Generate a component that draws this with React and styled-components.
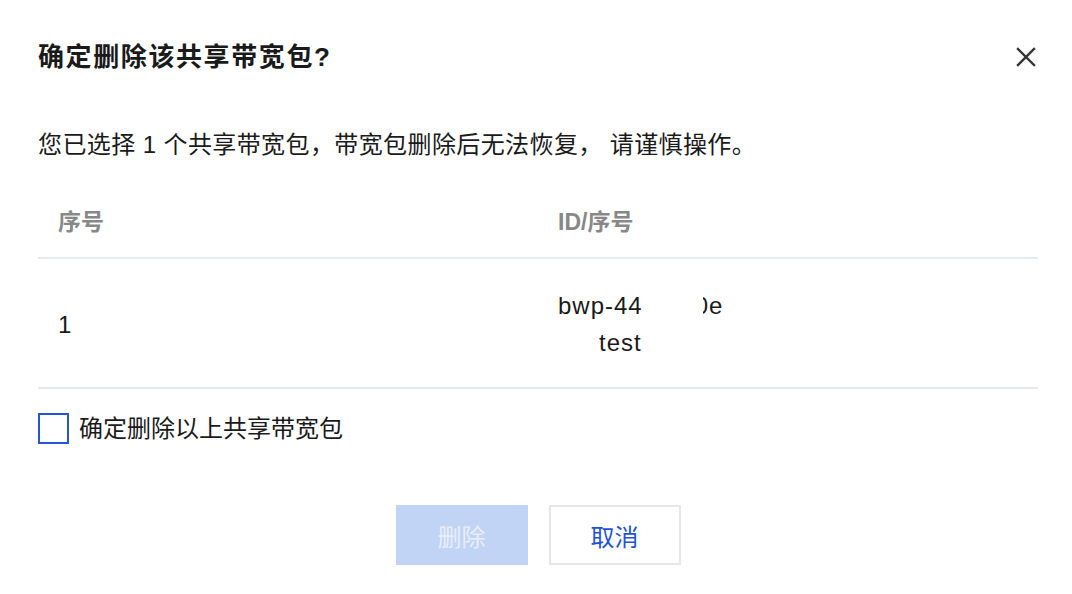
import React, { useState } from "react";
import styled, { createGlobalStyle } from "styled-components";

const GlobalStyle = createGlobalStyle`
  html, body {
    margin: 0;
    padding: 0;
    background: #ffffff;
  }
  body {
    font-family: "Liberation Sans", "Noto Sans CJK SC", sans-serif;
    color: #1a1a1a;
  }
`;

const Dialog = styled.div`
  width: 1072px;
  height: 594px;
  box-sizing: border-box;
  padding: 40px 34px 0 38px;
  background: #fff;
`;

const Header = styled.div`
  display: flex;
  align-items: center;
  justify-content: space-between;
  height: 34px;
`;

const Title = styled.h2`
  margin: 0;
  font-family: "Liberation Sans", "Noto Sans CJK SC", sans-serif;
  font-size: 26px;
  font-weight: 700;
  letter-spacing: 1.6px;
  color: #1a1a1a;
  line-height: 34px;
`;

const CloseBtn = styled.button`
  display: flex;
  align-items: center;
  justify-content: center;
  width: 24px;
  height: 24px;
  padding: 0;
  border: none;
  background: none;
  cursor: pointer;
  color: #333;
`;

const Message = styled.p`
  margin: 53px 0 0;
  font-size: 24px;
  line-height: 36px;
  letter-spacing: 0.4px;
  color: #1a1a1a;
`;

const Table = styled.div`
  margin-top: 20px;
  width: 1000px;
`;

const Row = styled.div`
  display: grid;
  grid-template-columns: 1fr 1fr;
  border-bottom: 2px solid #e6e9ef;
  padding: ${(p) => (p.$head ? "0" : "28px 0 26px")};
  height: ${(p) => (p.$head ? "74px" : "auto")};
  align-items: center;
`;

const HeadCell = styled.div`
  padding-left: 20px;
  font-size: 23px;
  font-weight: 700;
  color: #888888;
`;

const Cell = styled.div`
  padding-left: 20px;
  font-size: 24px;
  line-height: 37px;
  color: #1a1a1a;
`;

const IdLine = styled.div`
  letter-spacing: 1px;
  white-space: nowrap;
`;

const Mask = styled.span`
  display: inline-block;
  width: ${(p) => p.$w}px;
  margin-right: ${(p) => p.$overlap || 0}px;
  height: 30px;
  vertical-align: middle;
  background: #fff;
  position: relative;
  z-index: 1;
`;

const CheckRow = styled.label`
  display: flex;
  align-items: center;
  gap: 10px;
  margin-top: 24px;
  font-size: 24px;
  line-height: 31px;
  cursor: pointer;
`;

const Box = styled.span`
  width: 31px;
  height: 31px;
  box-sizing: border-box;
  border: 2px solid #2356d6;
  background: ${(p) => (p.$on ? "#1e54d3" : "#fff")};
  display: flex;
  align-items: center;
  justify-content: center;
`;

const Footer = styled.div`
  display: flex;
  justify-content: center;
  gap: 21px;
  margin-top: 61px;
`;

const Button = styled.button`
  width: 132px;
  height: 60px;
  box-sizing: border-box;
  font-family: "Liberation Sans", "Noto Sans CJK SC", sans-serif;
  font-size: 24px;
  cursor: pointer;
  border: 2px solid ${(p) => (p.$primary ? "#c1d4f6" : "#e6e7ee")};
  background: ${(p) => (p.$primary ? "#c1d4f6" : "#fff")};
  color: ${(p) => (p.$primary ? "#e8eef9" : "#1e54d3")};
`;

export default function App() {
  const [checked, setChecked] = useState(false);

  return (
    <>
      <GlobalStyle />
      <Dialog>
        <Header>
          <Title>确定删除该共享带宽包?</Title>
          <CloseBtn aria-label="关闭">
            <svg width="20" height="20" viewBox="0 0 20 20">
              <path d="M2 2 L18 18 M18 2 L2 18" stroke="currentColor" strokeWidth="2.4" strokeLinecap="square" />
            </svg>
          </CloseBtn>
        </Header>
        <Message>您已选择 1 个共享带宽包，带宽包删除后无法恢复， 请谨慎操作。</Message>
        <Table>
          <Row $head>
            <HeadCell>序号</HeadCell>
            <HeadCell>ID/序号</HeadCell>
          </Row>
          <Row>
            <Cell>1</Cell>
            <Cell>
              <IdLine>
                bwp-44<Mask $w={60} $overlap={-8} />0e
              </IdLine>
              <IdLine>
                <Mask $w={41} />test
              </IdLine>
            </Cell>
          </Row>
        </Table>
        <CheckRow onClick={() => setChecked(!checked)}>
          <Box $on={checked}>
            {checked && (
              <svg width="18" height="18" viewBox="0 0 18 18">
                <path d="M3 9 L7.5 13 L15 4.5" fill="none" stroke="#fff" strokeWidth="2.4" />
              </svg>
            )}
          </Box>
          确定删除以上共享带宽包
        </CheckRow>
        <Footer>
          <Button $primary disabled={!checked}>删除</Button>
          <Button>取消</Button>
        </Footer>
      </Dialog>
    </>
  );
}
